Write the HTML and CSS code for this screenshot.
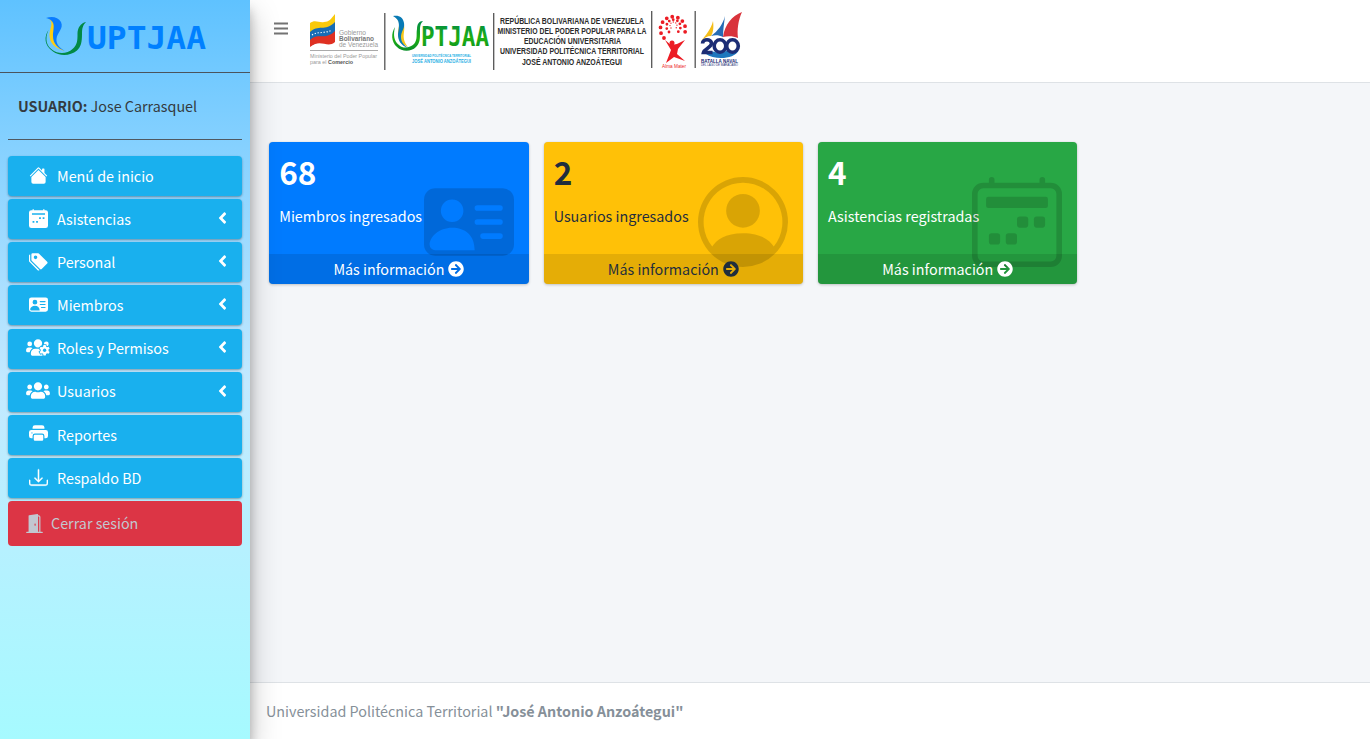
FILE: index.html
```html
<!DOCTYPE html>
<html lang="es">
<head>
<meta charset="utf-8">
<title>UPTJAA</title>
<link rel="stylesheet" href="styles.css">
</head>
<body>
<svg class="defs" width="0" height="0">
  <defs>
    <symbol id="angle" viewBox="0 0 256 512"><path d="M31.7 239l136-136c9.4-9.4 24.6-9.4 33.9 0l22.6 22.6c9.4 9.4 9.4 24.6 0 33.9L127.9 256l96.4 96.4c9.4 9.4 9.4 24.6 0 33.9L201.7 409c-9.4 9.4-24.6 9.4-33.9 0l-136-136c-9.5-9.4-9.5-24.6-.1-34z"/></symbol>
    <symbol id="arrow" viewBox="0 0 512 512"><path d="M256 8c137 0 248 111 248 248S393 504 256 504 8 393 8 256 119 8 256 8zm-28.9 143.6l75.5 72.4H120c-13.3 0-24 10.7-24 24v16c0 13.3 10.7 24 24 24h182.6l-75.5 72.4c-9.7 9.3-9.9 24.8-.4 34.3l11 10.9c9.4 9.4 24.6 9.4 33.9 0L404.3 273c9.4-9.4 9.4-24.6 0-33.9L271.6 106.3c-9.4-9.4-24.6-9.4-33.9 0l-11 10.9c-9.5 9.6-9.3 25.1.4 34.4z"/></symbol>
    <symbol id="vcard" viewBox="0 0 16 16"><path fill-rule="evenodd" d="M2 2h12a2 2 0 0 1 2 2v8a2 2 0 0 1-2 2H2a2 2 0 0 1-2-2V4a2 2 0 0 1 2-2zM9 5.500a.5.5 0 0 0 .5.5h4a.5.5 0 0 0 0-1h-4a.5.5 0 0 0-.5.5zM9 8a.5.5 0 0 0 .5.5h4a.5.5 0 0 0 0-1h-4A.5.5 0 0 0 9 8zm1 2.500a.5.5 0 0 0 .5.5h3a.5.5 0 0 0 0-1h-3a.5.5 0 0 0-.5.5zM9 13C9 10.300 7.300 9 5 9s-4 1.600-4 3a1 1 0 0 0 1 1zM7 6a2 2 0 1 0-4 0 2 2 0 0 0 4 0z"/></symbol>
    <symbol id="users" viewBox="0 0 640 512"><path d="M96 224c35.3 0 64-28.7 64-64s-28.7-64-64-64-64 28.700-64 64 28.700 64 64 64zm448 0c35.3 0 64-28.7 64-64s-28.7-64-64-64-64 28.700-64 64 28.700 64 64 64zm32 32h-64c-17.6 0-33.5 7.100-45.100 18.600 40.300 22.100 68.900 62 75.100 109.400h66c17.700 0 32-14.300 32-32v-32c0-35.300-28.700-64-64-64zm-256 0c61.900 0 112-50.100 112-112S381.900 32 320 32 208 82.100 208 144s50.100 112 112 112zm76.800 32h-8.300c-20.800 10-43.900 16-68.500 16s-47.600-6-68.500-16h-8.300C179.600 288 128 339.600 128 403.200V432c0 26.500 21.500 48 48 48h288c26.500 0 48-21.500 48-48v-28.800c0-63.600-51.600-115.200-115.200-115.200zm-223.700-13.400C161.500 263.100 145.600 256 128 256H64c-35.300 0-64 28.700-64 64v32c0 17.700 14.300 32 32 32h65.900c6.300-47.400 34.900-87.300 75.200-109.400z"/></symbol>
  </defs>
</svg>
<div class="app">
  <aside class="sidebar">
    <a class="brand">
      <svg width="170" height="46" viewBox="40 12 170 46">
        <path fill="#028a45" d="M48.500 30c-4 9-2 16 4 20 5 4 15 4 20-1 5-4 5-9 5-15 0-6 3-11 8.500-12-3 3-4 6-4 12 0 8-1 13-5 16.500-7 6-18 5.500-24 1-9-6-9-15-4.500-21.500z"/>
        <path fill="#ffce12" d="M48.500 19c6 3 1 9 1 16 0 8 5 13 15 16-7-4-10-9-9.500-16 1-7 2-13-6.500-16z"/>
        <path fill="#0a7cff" d="M46 18c6-2 12-1 15 4 3 7-4 10-4.500 17-.5 5 3 9 8.500 12-8-3-12-8-12-15 0-8 4-15-7-18z"/>
        <text x="87" y="49" class="wordmark" fill="#0080ff" textLength="119" lengthAdjust="spacingAndGlyphs">UPTJAA</text>
      </svg>
    </a>
    <div class="user"><b>USUARIO:</b> Jose Carrasquel</div>
    <nav class="menu">
      <a class="item"><svg class="ico" viewBox="0 0 16 16"><path d="M8 3.300l6 6V13.500A1.500 1.500 0 0 1 12.500 15h-9A1.500 1.500 0 0 1 2 13.500V9.300z"/><path d="M13 2.500V6l-2-2V2.500a.5.5 0 0 1 .5-.5h1a.5.5 0 0 1 .5.5zM7.300 1.500a1 1 0 0 1 1.400 0l6.650 6.650-.7.700L8 2.200 1.350 8.850l-.7-.7z"/></svg><span>Menú de inicio</span></a>
      <a class="item"><svg class="ico" viewBox="0 0 16 16"><path fill-rule="evenodd" d="M3.500 0a.5.5 0 0 1 .5.500V1h8V.500a.5.500 0 0 1 1 0V1h1a2 2 0 0 1 2 2v11a2 2 0 0 1-2 2H2a2 2 0 0 1-2-2V3a2 2 0 0 1 2-2h1V.500a.5.500 0 0 1 .5-.5zM2.500 3.500v1.300h11V3.500zM8.500 7v1.500H10V7zM11.500 7v1.500H13V7zM3 10v1.500h1.500V10zM6 10v1.500h1.500V10z"/></svg><span>Asistencias</span><svg class="chev"><use href="#angle"/></svg></a>
      <a class="item"><svg class="ico" viewBox="0 0 16 16"><path fill-rule="evenodd" d="M2 2a1 1 0 0 1 1-1h4.586a1 1 0 0 1 .707.293l7 7a1 1 0 0 1 0 1.414l-4.586 4.586a1 1 0 0 1-1.414 0l-7-7A1 1 0 0 1 2 6.586V2zm3.500 4a1.500 1.500 0 1 0 0-3 1.500 1.500 0 0 0 0 3z"/><path d="M1.293 7.793A1 1 0 0 1 1 7.086V2a1 1 0 0 0-1 1v4.586a1 1 0 0 0 .293.707l7 7a1 1 0 0 0 1.414 0l.043-.043z"/></svg><span>Personal</span><svg class="chev"><use href="#angle"/></svg></a>
      <a class="item"><svg class="ico"><use href="#vcard"/></svg><span>Miembros</span><svg class="chev"><use href="#angle"/></svg></a>
      <a class="item"><svg class="ico wide" viewBox="0 0 640 512"><path d="M96 224a64 64 0 1 0 0-128 64 64 0 0 0 0 128zM544 224a64 64 0 1 0 0-128 64 64 0 0 0 0 128zM320 256a112 112 0 1 0 0-224 112 112 0 0 0 0 224zM173 274.600C161.500 263 145.600 256 128 256H64c-35 0-64 29-64 64v32c0 18 14 32 32 32h66c6-47 35-87 75-109.400zM243 288C180 288 128 340 128 403v29c0 26 21 48 48 48h270V288z"/><path class="cog" fill-rule="evenodd" d="M468 190h60l9 42 26 15 41-13 30 50-31 29v34l31 29-30 50-41-13-26 15-9 42h-60l-9-42-26-15-41 13-30-50 31-29v-34l-31-29 30-50 41 13 26-15z"/><circle class="hole" cx="498" cy="330" r="45"/></svg><span>Roles y Permisos</span><svg class="chev"><use href="#angle"/></svg></a>
      <a class="item"><svg class="ico wide"><use href="#users"/></svg><span>Usuarios</span><svg class="chev"><use href="#angle"/></svg></a>
      <a class="item"><svg class="ico" viewBox="0 0 16 16"><path d="M5 1a2 2 0 0 0-2 2v1h10V3a2 2 0 0 0-2-2H5zm6 8H5a1 1 0 0 0-1 1v3a1 1 0 0 0 1 1h6a1 1 0 0 0 1-1v-3a1 1 0 0 0-1-1z"/><path d="M0 7a2 2 0 0 1 2-2h12a2 2 0 0 1 2 2v3a2 2 0 0 1-2 2h-1v-2a2 2 0 0 0-2-2H5a2 2 0 0 0-2 2v2H2a2 2 0 0 1-2-2V7zm2.500 1a.5.5 0 1 0 0-1 .5.5 0 0 0 0 1z"/></svg><span>Reportes</span></a>
      <a class="item"><svg class="ico bold" viewBox="0 0 16 16"><path d="M.5 9.900a.5.5 0 0 1 .5.5v2.500a1 1 0 0 0 1 1h12a1 1 0 0 0 1-1v-2.500a.5.5 0 0 1 1 0v2.500a2 2 0 0 1-2 2H2a2 2 0 0 1-2-2v-2.500a.5.5 0 0 1 .5-.5z"/><path d="M7.646 11.854a.5.5 0 0 0 .708 0l3-3a.5.5 0 0 0-.708-.708L8.500 10.293V1.500a.5.5 0 0 0-1 0v8.793L5.354 8.146a.5.5 0 1 0-.708.708l3 3z"/></svg><span>Respaldo BD</span></a>
      <a class="item logout"><svg class="ico door" viewBox="0 0 16 16"><path d="M1.500 15a.5.5 0 0 0 0 1h13a.5.5 0 0 0 0-1H13V2.500A1.500 1.500 0 0 0 11.500 1H11V.5a.5.5 0 0 0-.57-.495l-7 1A.5.5 0 0 0 3 1.500V15H1.500zM11 2h.5a.5.5 0 0 1 .5.500V15h-1V2zm-2.500 8c-.276 0-.5-.448-.5-1s.224-1 .5-1 .5.448.5 1-.224 1-.5 1z"/></svg><span>Cerrar sesión</span></a>
    </nav>
  </aside>
  <div class="main">
    <header class="navbar">
      <svg class="bars" viewBox="0 0 14 13" width="14" height="13"><path d="M0 .5h14v2H0zM0 5.500h14v2H0zM0 10.500h14v2H0z"/></svg>
      <svg class="banner" width="436" height="66" viewBox="308 8 436 66">
        <path fill="#f9c90b" d="M310 23c5-4 9 0 14-1 5 0 7-3 11-8v16l-25 8z"/>
        <path fill="#176cb5" d="M310 32c8-8 15 0 25-10v13l-25 11z"/>
        <path fill="#df3022" d="M310 40c8-8 15 1 25-9v11c-8 7-14-4-25 5z"/>
        <path fill="none" stroke="#fff" stroke-width="1.200" stroke-dasharray="1.200 1.800" d="M312 35c6-4 13-1 20-5"/>
        <g class="sans" fill="#999">
          <text x="339" y="35" font-size="6.500" textLength="27" lengthAdjust="spacingAndGlyphs">Gobierno</text>
          <text x="339" y="41" font-size="6.500" font-weight="bold" fill="#777" textLength="35" lengthAdjust="spacingAndGlyphs">Bolivariano</text>
          <text x="339" y="47" font-size="6.500" textLength="39" lengthAdjust="spacingAndGlyphs">de Venezuela</text>
          <text x="310" y="58" font-size="6" textLength="67" lengthAdjust="spacingAndGlyphs">Ministerio del Poder Popular</text>
          <text x="310" y="64" font-size="6" textLength="43" lengthAdjust="spacingAndGlyphs">para el <tspan font-weight="bold" fill="#555">Comercio</tspan></text>
        </g>
        <path stroke="#aaa" d="M310 50.500h68"/>
        <path stroke="#555" stroke-width="1.300" d="M384.800 13v57M493.700 13v57M651.700 11v57M695.200 11v57"/>
        <linearGradient id="leaf" gradientUnits="userSpaceOnUse" x1="0" y1="22" x2="0" y2="52"><stop offset="0" stop-color="#008c45"/><stop offset=".55" stop-color="#1fb012"/><stop offset="1" stop-color="#058a2a"/></linearGradient>
        <path fill="url(#leaf)" d="M395 27c-2 8-1 14 4 18 4 4 11 3 15-1 4-5 2-10 3-15 0-5 2-8 6-8-3 3-3 6-3 11 0 7 0 11-4 15-5 5-14 5-19 0-6-5-6-14-2-20z"/>
        <path fill="#f5c61a" d="M395 17c7 5 3 9 3 17 0 6 4 10 10 13-4-5-5-9-4-15 1-8 0-12-9-15z"/>
        <path fill="#087ab5" d="M393 16c6-1 10 1 11 7 1 6-3 8-3 14 0 5 3 8 7 11-8-3-10-8-10-14 1-7 3-14-5-18z"/>
        <text x="421" y="46" class="wordmark small" fill="url(#leaf)" textLength="68" lengthAdjust="spacingAndGlyphs">PTJAA</text>
        <g class="sans" fill="#28afe5" font-weight="bold">
          <text x="412" y="57" font-size="3.500" textLength="59" lengthAdjust="spacingAndGlyphs">UNIVERSIDAD POLITÉCNICA TERRITORIAL</text>
          <text x="412" y="63" font-size="5" textLength="59" lengthAdjust="spacingAndGlyphs">JOSÉ ANTONIO ANZOÁTEGUI</text>
        </g>
        <g class="sans" fill="#2c2c2c" font-weight="bold" font-size="8.600">
          <text x="500" y="23.700" textLength="144" lengthAdjust="spacingAndGlyphs">REPÚBLICA BOLIVARIANA DE VENEZUELA</text>
          <text x="497.500" y="33.700" textLength="149" lengthAdjust="spacingAndGlyphs">MINISTERIO DEL PODER POPULAR PARA LA</text>
          <text x="524" y="44" textLength="97" lengthAdjust="spacingAndGlyphs">EDUCACIÓN UNIVERSITARIA</text>
          <text x="500" y="54.200" textLength="144" lengthAdjust="spacingAndGlyphs">UNIVERSIDAD POLITÉCNICA TERRITORIAL</text>
          <text x="522" y="64.500" textLength="100" lengthAdjust="spacingAndGlyphs">JOSÉ ANTONIO ANZOÁTEGUI</text>
        </g>
        <g fill="none" stroke="#ec1c24" stroke-linecap="round">
          <path stroke-width="3.800" stroke-dasharray="0 5.700" d="M664 38a12.500 12.500 0 1 1 20-3"/>
          <path stroke-width="2.800" stroke-dasharray="0 4.100" d="M669 32a7 7 0 1 1 9 0"/>
          <path stroke-width="1.400" stroke-dasharray="0 2.600" d="M671 28a3.500 3.500 0 1 1 5 0"/>
        </g>
        <circle cx="672" cy="43" r="2.500" fill="#ec1c24"/>
        <path fill="#ec1c24" d="M665 40l6 5 6-1 8-4-7 9-1 5 8 7-11-4-8 6 5-13z"/>
        <text class="sans" x="662" y="68" font-size="5" fill="#ec1c24" textLength="24" lengthAdjust="spacingAndGlyphs">Alma Mater</text>
        <path fill="#f4bd18" d="M713 21c1 7 0 12-2 15-4 0-7 2-10 5 5-6 10-12 12-20z"/>
        <path fill="#256bb4" d="M725 16c-1 8-2 14-2 21-4-2-8-2-12-1 7-5 12-12 14-20z"/>
        <path fill="#d9343c" d="M742 12c-4 9-5 18-4 26-5-2-10-2-15-1 2-13 9-21 19-25z"/>
        <path fill="#1d77bd" d="M706 54c7-6 11 1 18-2 7-4 11 2 15-2-5 10-25 10-33 4z"/>
        <g fill="#fff" stroke="#1c2d75" stroke-width="3.600">
          <ellipse cx="720" cy="46" rx="5.800" ry="6.200"/><ellipse cx="732.500" cy="46" rx="5.800" ry="6.200"/>
          <path fill="none" d="M702.500 43.500c0-5 9-5 9 0 0 4-7 5-8 9h9"/>
        </g>
        <text class="sans" x="701" y="63" font-size="5" fill="#1c2d75" font-weight="bold" textLength="37" lengthAdjust="spacingAndGlyphs">BATALLA NAVAL</text>
        <text class="sans" x="701" y="66" font-size="2.800" fill="#1c2d75" textLength="37" lengthAdjust="spacingAndGlyphs">DEL LAGO DE MARACAIBO</text>
      </svg>
    </header>
    <main class="content">
      <section class="card blue">
        <div class="inner"><h3>68</h3><p>Miembros ingresados</p></div>
        <svg class="big"><use href="#vcard"/></svg>
        <a class="more">Más información <svg class="go"><use href="#arrow"/></svg></a>
      </section>
      <section class="card yellow">
        <div class="inner"><h3>2</h3><p>Usuarios ingresados</p></div>
        <svg class="big" viewBox="0 0 16 16"><path fill-rule="evenodd" d="M11 6a3 3 0 1 1-6 0 3 3 0 0 1 6 0zM0 8a8 8 0 1 1 16 0A8 8 0 0 1 0 8zm8-7a7 7 0 0 0-5.468 11.370C3.242 11.226 4.805 10 8 10s4.757 1.225 5.468 2.370A7 7 0 0 0 8 1z"/></svg>
        <a class="more">Más información <svg class="go"><use href="#arrow"/></svg></a>
      </section>
      <section class="card green">
        <div class="inner"><h3>4</h3><p>Asistencias registradas</p></div>
        <svg class="big" viewBox="0 0 16 16"><path fill-rule="evenodd" d="M3.500 0a.5.5 0 0 1 .5.5V1h8V.5a.5.5 0 0 1 1 0V1h1a2 2 0 0 1 2 2v11a2 2 0 0 1-2 2H2a2 2 0 0 1-2-2V3a2 2 0 0 1 2-2h1V.5a.5.5 0 0 1 .5-.5zM2 2a1 1 0 0 0-1 1v11a1 1 0 0 0 1 1h12a1 1 0 0 0 1-1V3a1 1 0 0 0-1-1H2z"/><rect x="2.500" y="3.500" width="11" height="2" rx=".4"/><rect x="8" y="7" width="2" height="2" rx=".5"/><rect x="11" y="7" width="2" height="2" rx=".5"/><rect x="3" y="10" width="2" height="2" rx=".5"/><rect x="6" y="10" width="2" height="2" rx=".5"/></svg>
        <a class="more">Más información <svg class="go"><use href="#arrow"/></svg></a>
      </section>
    </main>
    <footer class="footer">Universidad Politécnica Territorial <b>"José Antonio Anzoátegui"</b></footer>
  </div>
</div>
</body>
</html>
```
FILE: styles.css
```css
* { box-sizing: border-box; }
body {
  margin: 0;
  font-family: "Noto Sans CJK SC", "Noto Sans", sans-serif;
  font-size: 14.34px;
  line-height: 24px;
  color: #212529;
}
svg { fill: currentColor; flex: none; }
.defs { position: absolute; }
.app { display: flex; height: 739px; overflow: hidden; }

.sidebar {
  width: 250px;
  flex: none;
  z-index: 2;
  background: linear-gradient(#5fc2ff 0%, #c4e9ff 52%, #a6faff 100%);
  box-shadow: 0 14px 28px rgba(0,0,0,.25), 0 10px 10px rgba(0,0,0,.22);
}
.brand {
  display: flex;
  height: 73px;
  padding: 12px 0 0 40px;
  border-bottom: 1px solid #4b545c;
}
.wordmark { font: bold 31.5px "DejaVu Sans Mono", monospace; }
.small { font-size: 27px; }
.sans { font-family: "Liberation Sans", sans-serif; }
.user {
  height: 67px;
  margin: 0 8px 16px;
  padding: 21px 10px 0;
  border-bottom: 1px solid #4f5962;
  color: #343a40;
}
.menu { display: flex; flex-direction: column; gap: 3.17px; padding: 0 8px; }
.item {
  display: flex;
  align-items: center;
  height: 40px;
  padding: 0 15px 0 18px;
  border-radius: 4px;
  background: #19b0ee;
  color: #fff;
  box-shadow: 0 1px 3px rgba(0,0,0,.12), 0 1px 2px rgba(0,0,0,.24);
}
.item span { flex: 1; padding-bottom: .6px; }
.ico { width: 19px; height: 19px; margin: 0 9.5px 2px 2.5px; }
.ico.wide { width: 24px; margin: 0 7px 2px 0; }
.ico.bold { stroke: currentColor; stroke-width: .3; }
.cog { stroke: #19b0ee; stroke-width: 44px; paint-order: stroke; }
.hole { fill: #19b0ee; }
.chev { width: 9px; height: 18px; margin-bottom: 2.5px; }
.item.logout { height: 45px; background: #dc3545; color: #c2c7d0; box-shadow: none; }
.ico.door { width: 19px; height: 19px; margin: 0 7px 1px -1px; }

.main { flex: 1; display: flex; flex-direction: column; background: #f4f6f9; }
.navbar {
  display: flex;
  align-items: flex-start;
  height: 83px;
  padding: 8px 0 0 24px;
  background: #fff;
  border-bottom: 1px solid #dee2e6;
}
.bars { margin: 14px 20px 0 0; color: #737373; }
.content {
  flex: 1;
  display: grid;
  grid-template-columns: repeat(3, 259.4px);
  gap: 15px;
  align-items: start;
  padding: 59px 0 0 19.25px;
}
.card {
  position: relative;
  display: flex;
  flex-direction: column;
  height: 142px;
  border-radius: 4px;
  overflow: hidden;
  color: #fff;
  box-shadow: 0 0 1px rgba(0,0,0,.13), 0 1px 3px rgba(0,0,0,.2);
}
.blue { background: #007bff; }
.yellow { background: #ffc107; color: #1f2d3d; }
.green { background: #28a745; }
.inner { flex: 1; padding: 8px 10px; }
.card h3 { margin: 0 0 12px; font-size: 31.5px; line-height: 42px; font-weight: bold; }
.card p { margin: 0; }
.big {
  position: absolute;
  right: 15px;
  top: 35px;
  width: 90px;
  height: 90px;
  color: rgba(0,0,0,.15);
}
.more {
  position: relative;
  display: flex;
  align-items: center;
  justify-content: center;
  gap: 4px;
  height: 30px;
  background: rgba(0,0,0,.1);
}
.go { width: 16px; height: 16px; }
.footer {
  height: 57px;
  padding: 16px 16px;
  background: #fff;
  border-top: 1px solid #dee2e6;
  color: #869099;
}
```
